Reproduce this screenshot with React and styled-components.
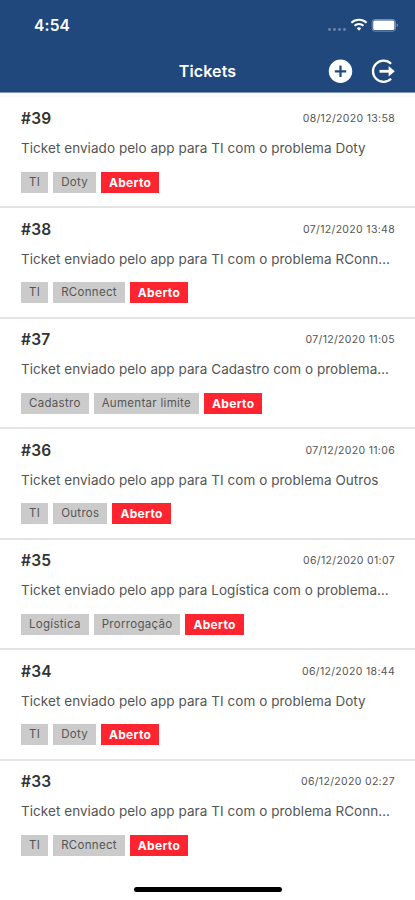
import React from 'react'
import styled, { createGlobalStyle } from 'styled-components'

const GlobalStyle = createGlobalStyle`
  * { box-sizing: border-box; }
  body {
    margin: 0;
    background: #fff;
    font-family: Inter, "Liberation Sans", sans-serif;
  }
`

const Screen = styled.div`
  display: flex;
  flex-direction: column;
  width: 415px;
  height: 900px;
  overflow: hidden;
`

const Header = styled.header`
  flex: none;
  height: 93px;
  color: #fff;
  background: #20487c;
  border-bottom: 1px solid #8397b4;
`

const StatusBar = styled.div`
  display: flex;
  align-items: center;
  justify-content: space-between;
  height: 50px;
  padding: 0 16px 0 34px;
`

const Time = styled.span`
  padding-top: 2px;
  font-size: 15.5px;
  font-weight: 600;
  line-height: 20px;
  letter-spacing: 0.2px;
`

const NavBar = styled.div`
  display: grid;
  grid-template-columns: 1fr auto 1fr;
  align-items: center;
  height: 42px;
  padding: 0 19px;
`

const Title = styled.h1`
  grid-column: 2;
  margin: 0;
  font-size: 16px;
  font-weight: 600;
  line-height: 20px;
  letter-spacing: 0.15px;
`

const Actions = styled.div`
  display: flex;
  justify-content: flex-end;
  gap: 18px;
`

const List = styled.main`
  flex: 1;
  border-top: 4px solid #fafafa;
  padding-top: 0.5px;
`

const Row = styled.article`
  height: 110.5px;
  padding: 10px 20px 0 21px;
  border-bottom: ${ props => props.last ? 'none' : '2px solid #e4e4e4' };
`

const RowTop = styled.div`
  display: flex;
  align-items: center;
  justify-content: space-between;
  height: 22px;
`

const Number = styled.h2`
  margin: 0;
  color: #333;
  font-size: 15.5px;
  font-weight: 600;
  letter-spacing: 0.2px;
`

const DateText = styled.time`
  color: #555;
  font-size: 10.5px;
  letter-spacing: 0.33px;
`

const Message = styled.p`
  margin: 8.5px 0 13.5px;
  color: #555;
  font-size: 13.5px;
  line-height: 20px;
  letter-spacing: 0.05px;
  white-space: nowrap;
`

const Tags = styled.div`
  display: flex;
  gap: 5px;
`

const Tag = styled.span`
  height: 21px;
  padding: 0 8px;
  color: ${ props => props.open ? '#fff' : '#555' };
  background: ${ props => props.open ? '#fe2430' : '#cbcbcb' };
  font-size: ${ props => props.open ? 12 : 11.5 }px;
  font-weight: ${ props => props.open ? 700 : 400 };
  line-height: 21px;
  letter-spacing: 0.3px;
`

const HomeIndicator = styled.div`
  flex: none;
  align-self: center;
  width: 148px;
  height: 5px;
  margin-bottom: 8px;
  border-radius: 3px;
  background: #000;
`

const StatusIcons = () => (
  <svg width="72" height="16" viewBox="0 0 72 16" fill="none">
    <g fill="#6b86ab">
      <circle cx="2.5" cy="12.5" r="1.4" />
      <circle cx="7.5" cy="12.5" r="1.4" />
      <circle cx="12.5" cy="12.5" r="1.4" />
      <circle cx="17.5" cy="12.5" r="1.4" />
    </g>
    <g stroke="#fff" strokeWidth="2">
      <path d="M24.4 5.7a11 11 0 0 1 15.2 0" />
      <path d="M27.5 8.8a6.5 6.5 0 0 1 9 0" />
    </g>
    <path d="M29.8 11.3a3.2 3.2 0 0 1 4.4 0L32 13.7z" fill="#fff" />
    <rect x="45.2" y="2.6" width="23.2" height="11.5" rx="2.5" stroke="#7b92b4" />
    <rect x="46.2" y="3.6" width="21.2" height="9.5" rx="1.5" fill="#fff" />
    <path d="M69.7 6.6c1.6.7 1.6 2.8 0 3.5z" fill="#8499b8" />
  </svg>
)

const AddIcon = () => (
  <svg width="25" height="25" viewBox="0 0 25 25">
    <circle cx="12.5" cy="12.3" r="11.7" fill="#fff" />
    <path d="M12.5 6.6v11.4M6.8 12.3h11.4" stroke="#20487c" strokeWidth="2.2" />
  </svg>
)

const LogoutIcon = () => (
  <svg width="25" height="25" viewBox="0 0 25 25" fill="none">
    <path d="M20.1 4.8A10.6 10.6 0 1 0 20.1 19.8" stroke="#fff" strokeWidth="2.3" />
    <path d="M8.5 12.3h10" stroke="#fff" strokeWidth="2.8" />
    <path d="M17.6 7.1l6.2 5.2-6.2 5.2z" fill="#fff" />
  </svg>
)

const tickets = [
  { id: 39, date: '08/12/2020 13:58', area: 'TI', problem: 'Doty', text: 'TI com o problema Doty' },
  { id: 38, date: '07/12/2020 13:48', area: 'TI', problem: 'RConnect', text: 'TI com o problema RConn…' },
  { id: 37, date: '07/12/2020 11:05', area: 'Cadastro', problem: 'Aumentar limite', text: 'Cadastro com o problema…' },
  { id: 36, date: '07/12/2020 11:06', area: 'TI', problem: 'Outros', text: 'TI com o problema Outros' },
  { id: 35, date: '06/12/2020 01:07', area: 'Logística', problem: 'Prorrogação', text: 'Logística com o problema…' },
  { id: 34, date: '06/12/2020 18:44', area: 'TI', problem: 'Doty', text: 'TI com o problema Doty' },
  { id: 33, date: '06/12/2020 02:27', area: 'TI', problem: 'RConnect', text: 'TI com o problema RConn…' },
]

const Ticket = ({ id, date, area, problem, text, last }) => (
  <Row last={last}>
    <RowTop>
      <Number>#{id}</Number>
      <DateText>{date}</DateText>
    </RowTop>
    <Message>Ticket enviado pelo app para {text}</Message>
    <Tags>
      <Tag>{area}</Tag>
      <Tag>{problem}</Tag>
      <Tag open>Aberto</Tag>
    </Tags>
  </Row>
)

export default () => (
  <Screen>
    <GlobalStyle />
    <Header>
      <StatusBar>
        <Time>4:54</Time>
        <StatusIcons />
      </StatusBar>
      <NavBar>
        <Title>Tickets</Title>
        <Actions>
          <AddIcon />
          <LogoutIcon />
        </Actions>
      </NavBar>
    </Header>
    <List>
      { tickets.map((ticket, i) => (
        <Ticket key={ticket.id} {...ticket} last={i === tickets.length - 1} />
      )) }
    </List>
    <HomeIndicator />
  </Screen>
)
